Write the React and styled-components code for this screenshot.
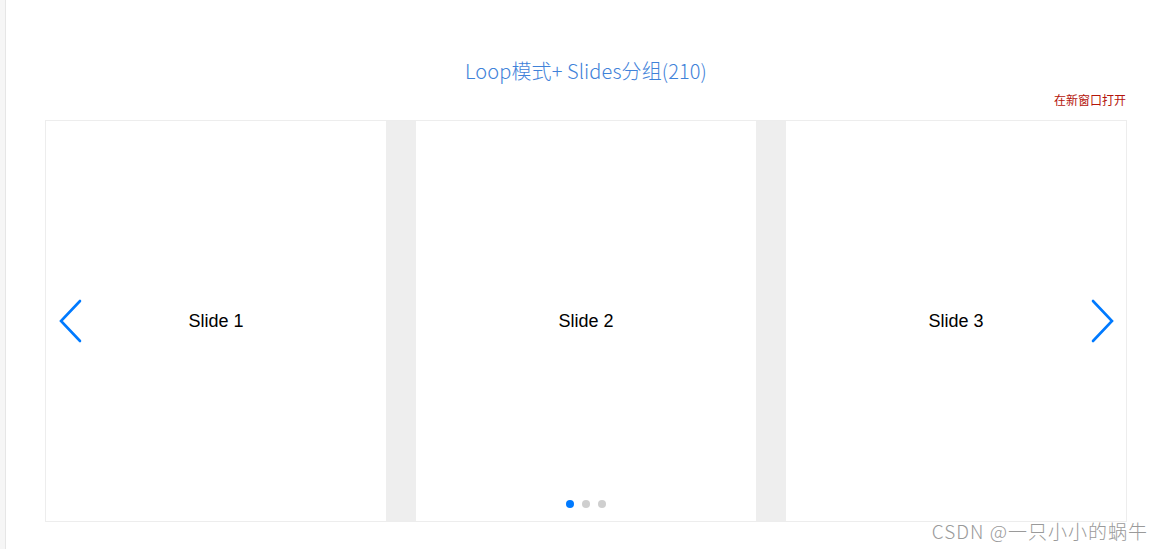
import React from "react";
import styled, { createGlobalStyle } from "styled-components";

const Global = createGlobalStyle`
  html, body { margin: 0; padding: 0; background: #fff; }
  body { font-family: "Liberation Sans", Arial, sans-serif; }
`;

const Page = styled.div`
  display: flex;
  width: 1162px;
  height: 549px;
  overflow: hidden;
  position: relative;
`;

const Sidebar = styled.div`
  width: 5px;
  flex: none;
  background: #f6f6f6;
  border-right: 1px solid #e6e6e6;
`;

const Main = styled.main`
  margin-left: 39px;
  width: 1082px;
  display: flex;
  flex-direction: column;
`;

const Title = styled.h1`
  margin: 57px 0 0;
  height: 28px;
  line-height: 28px;
  text-align: center;
  font-family: "Noto Sans CJK SC", "Noto Sans", sans-serif;
  font-weight: 300;
  font-size: 20px;
  letter-spacing: 0.1px;
  color: #3f82d9;
`;

const LinkRow = styled.div`
  display: flex;
  justify-content: flex-end;
  margin-top: 7px;
  height: 16px;
  padding-right: 1px;
`;

const OpenLink = styled.a`
  font-family: "Noto Sans CJK SC", sans-serif;
  font-size: 12px;
  line-height: 16px;
  color: #b5150b;
  text-decoration: none;
`;

const Frame = styled.div`
  position: relative;
  margin-top: 12px;
  height: 400px;
  border: 1px solid #ededed;
  display: grid;
  grid-template-columns: repeat(3, 340px);
  column-gap: 30px;
  background: #eeeeee;
`;

const Slide = styled.div`
  background: #fff;
  display: flex;
  align-items: center;
  justify-content: center;
  font-family: "Liberation Sans", Arial, sans-serif;
  font-size: 18px;
  color: #000;
`;

const Arrow = styled.button`
  position: absolute;
  top: 178px;
  ${(p) => (p.$side === "left" ? "left: 11px;" : "right: 11px;")}
  width: 27px;
  height: 44px;
  padding: 0;
  border: 0;
  background: transparent;
  display: flex;
  align-items: center;
  justify-content: center;
  cursor: pointer;
`;

const Dots = styled.div`
  position: absolute;
  bottom: 13px;
  left: 0;
  right: 0;
  display: flex;
  justify-content: center;
  gap: 8px;
`;

const Dot = styled.span`
  width: 8px;
  height: 8px;
  border-radius: 50%;
  background: ${(p) => (p.$active ? "#007aff" : "#cfcfcf")};
`;

const Watermark = styled.div`
  position: absolute;
  right: 14px;
  bottom: 5px;
  font-family: "Noto Sans CJK SC", "Noto Sans", sans-serif;
  font-weight: 300;
  font-size: 19px;
  color: #9a9a9a;
  letter-spacing: 1px;
`;

const Chevron = ({ dir }) => (
  <svg width="27" height="44" viewBox="0 0 27 44">
    {dir === "left" ? (
      <polyline points="23,2 4,22 23,42" fill="none" stroke="#007aff" strokeWidth="2.6" strokeLinecap="round" strokeLinejoin="miter" />
    ) : (
      <polyline points="5,2 24,22 5,42" fill="none" stroke="#007aff" strokeWidth="2.6" strokeLinecap="round" strokeLinejoin="miter" />
    )}
  </svg>
);

export default function App() {
  return (
    <>
      <Global />
      <Page>
        <Sidebar />
        <Main>
          <Title>Loop模式+ Slides分组(210)</Title>
          <LinkRow>
            <OpenLink href="#">在新窗口打开</OpenLink>
          </LinkRow>
          <Frame>
            <Slide>Slide 1</Slide>
            <Slide>Slide 2</Slide>
            <Slide>Slide 3</Slide>
            <Arrow $side="left" aria-label="prev"><Chevron dir="left" /></Arrow>
            <Arrow $side="right" aria-label="next"><Chevron dir="right" /></Arrow>
            <Dots>
              <Dot $active />
              <Dot />
              <Dot />
            </Dots>
          </Frame>
        </Main>
        <Watermark>CSDN @一只小小的蜗牛</Watermark>
      </Page>
    </>
  );
}
